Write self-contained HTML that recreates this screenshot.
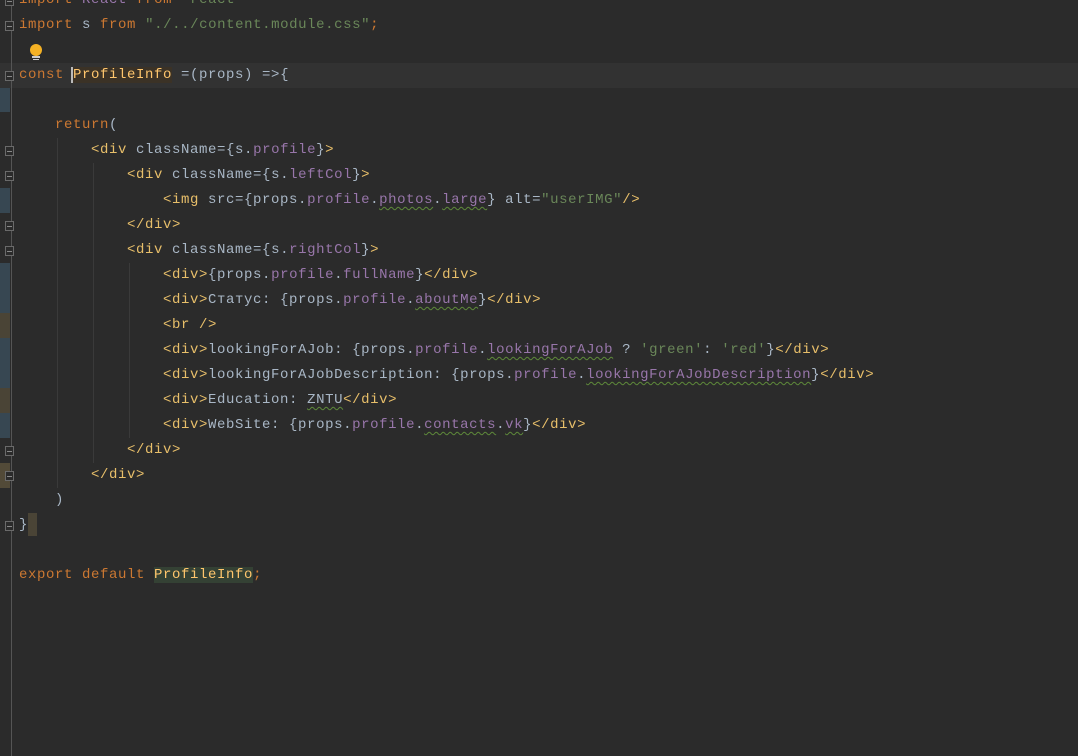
<!DOCTYPE html><html><head><meta charset="utf-8"><style>
body{margin:0;width:1078px;height:756px;background:#2b2b2b;overflow:hidden;position:relative;font-family:"Liberation Mono",monospace;font-size:14px;letter-spacing:0.6px;color:#a9b7c6}
.l{position:absolute;left:19px;height:25px;line-height:25px;white-space:pre}
.k{color:#cc7832}.s{color:#6a8759}.t{color:#e8bf6a}.p{color:#9876aa}.f{color:#ffc66d}
.u{text-decoration:underline wavy #5e8a3a;text-decoration-thickness:1px;text-underline-offset:3px}
.m{position:absolute;left:0;width:10px}
.g{position:absolute;top:0;bottom:0;width:1px;background:#3a3a3a}
.fold{position:absolute;left:5px;width:9px;height:10px;border:1px solid #6a6a6a;background:#2b2b2b;box-sizing:border-box}
.fold:after{content:"";position:absolute;left:1px;right:1px;top:4px;height:1px;background:#888}
</style></head><body>
<div style="position:absolute;left:0;top:63px;width:1078px;height:25px;background:#323232"></div>
<div class="m" style="top:88px;height:24px;background:#374752"></div>
<div class="m" style="top:188px;height:25px;background:#374752"></div>
<div class="m" style="top:263px;height:50px;background:#374752"></div>
<div class="m" style="top:313px;height:25px;background:#4a4436"></div>
<div class="m" style="top:338px;height:50px;background:#374752"></div>
<div class="m" style="top:388px;height:25px;background:#4a4436"></div>
<div class="m" style="top:413px;height:25px;background:#374752"></div>
<div class="m" style="top:463px;height:25px;background:#524a38"></div>
<div class="g" style="left:11px;background:#555"></div>
<div class="g" style="left:57px;top:138px;bottom:268px"></div>
<div class="g" style="left:93px;top:163px;bottom:293px"></div>
<div class="g" style="left:129px;top:263px;bottom:318px"></div>
<div class="fold" style="top:-4px"></div><div class="fold" style="top:21px"></div><div class="fold" style="top:71px"></div>
<div class="fold" style="top:146px"></div><div class="fold" style="top:171px"></div><div class="fold" style="top:221px"></div><div class="fold" style="top:246px"></div>
<div class="fold" style="top:446px"></div><div class="fold" style="top:471px"></div><div class="fold" style="top:521px"></div>
<div style="position:absolute;left:30px;top:44px;width:12px;height:12px;border-radius:50%;background:#f4b124"></div>
<div style="position:absolute;left:32px;top:56px;width:8px;height:2px;background:#ccc"></div>
<div style="position:absolute;left:33px;top:59px;width:6px;height:1px;background:#ccc"></div>
<div class="l" style="top:-12px"><span class="k">import</span> <span class="p">React</span> <span class="k">from</span> <span class="s">"react"</span></div>
<div class="l" style="top:13px"><span class="k">import</span> s <span class="k">from</span> <span class="s">"./../content.module.css"</span><span class="k">;</span></div>
<div class="l" style="top:63px"><span class="k">const</span> <span class="f" style="background:#3b3226;border-left:2px solid #bbb;margin-left:-2px">ProfileInfo</span> =(props) =>{</div>
<div class="l" style="top:113px">    <span class="k">return</span>(</div>
<div class="l" style="top:138px">        <span class="t">&lt;div</span> className={s.<span class="p">profile</span>}<span class="t">&gt;</span></div>
<div class="l" style="top:163px">            <span class="t">&lt;div</span> className={s.<span class="p">leftCol</span>}<span class="t">&gt;</span></div>
<div class="l" style="top:188px">                <span class="t">&lt;img</span> src={props.<span class="p">profile</span>.<span class="p u">photos</span>.<span class="p u">large</span>} alt=<span class="s">"userIMG"</span><span class="t">/&gt;</span></div>
<div class="l" style="top:213px">            <span class="t">&lt;/div&gt;</span></div>
<div class="l" style="top:238px">            <span class="t">&lt;div</span> className={s.<span class="p">rightCol</span>}<span class="t">&gt;</span></div>
<div class="l" style="top:263px">                <span class="t">&lt;div&gt;</span>{props.<span class="p">profile</span>.<span class="p">fullName</span>}<span class="t">&lt;/div&gt;</span></div>
<div class="l" style="top:288px">                <span class="t">&lt;div&gt;</span>Статус: {props.<span class="p">profile</span>.<span class="p u">aboutMe</span>}<span class="t">&lt;/div&gt;</span></div>
<div class="l" style="top:313px">                <span class="t">&lt;br /&gt;</span></div>
<div class="l" style="top:338px">                <span class="t">&lt;div&gt;</span>lookingForAJob: {props.<span class="p">profile</span>.<span class="p u">lookingForAJob</span> ? <span class="s">'green'</span>: <span class="s">'red'</span>}<span class="t">&lt;/div&gt;</span></div>
<div class="l" style="top:363px">                <span class="t">&lt;div&gt;</span>lookingForAJobDescription: {props.<span class="p">profile</span>.<span class="p u">lookingForAJobDescription</span>}<span class="t">&lt;/div&gt;</span></div>
<div class="l" style="top:388px">                <span class="t">&lt;div&gt;</span>Education: <span class="u">ZNTU</span><span class="t">&lt;/div&gt;</span></div>
<div class="l" style="top:413px">                <span class="t">&lt;div&gt;</span>WebSite: {props.<span class="p">profile</span>.<span class="p u">contacts</span>.<span class="p u">vk</span>}<span class="t">&lt;/div&gt;</span></div>
<div class="l" style="top:438px">            <span class="t">&lt;/div&gt;</span></div>
<div class="l" style="top:463px">        <span class="t">&lt;/div&gt;</span></div>
<div class="l" style="top:488px">    )</div>
<div class="l" style="top:513px">}<span style="display:inline-block;width:9px;height:23px;vertical-align:middle;background:#4a4436"></span></div>
<div class="l" style="top:563px"><span class="k">export default</span> <span style="background:#344134;color:#ffc66d">ProfileInfo</span><span class="k">;</span></div>
</body></html>
